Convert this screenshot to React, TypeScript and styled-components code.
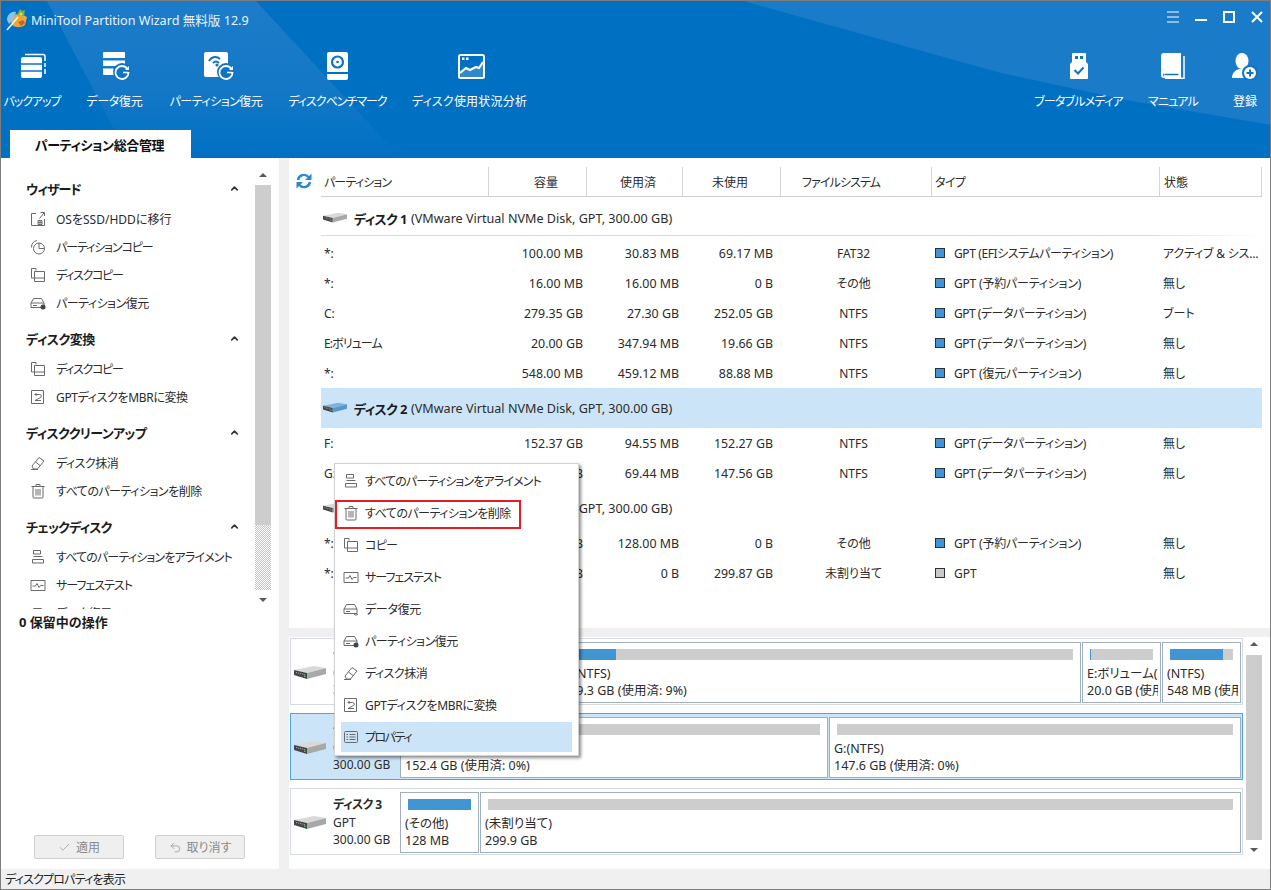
import React from "react";
import styled, { createGlobalStyle } from "styled-components";
import { Check, ChevronUp, Undo2 } from "lucide-react";

const GlobalStyle = createGlobalStyle`
  html, body {
    margin: 0;
    padding: 0;
    background: #fff;
  }
  body {
    font-family: "Noto Sans", "Noto Sans CJK JP", sans-serif;
    font-size: 12px;
    font-feature-settings: "palt";
    color: #2b2b2b;
    overflow: hidden;
  }
`;

// the kana in the original UI font is narrower than Noto's, so strings get tightened
const TRACK: Record<string, number> = {
  "バックアップ": -1.1,
  "パーティション復元": -0.5,
  "ディスクベンチマーク": -1,
  "ディスク使用状況分析": 0.2,
  "ブータブルメディア": -0.8,
  "マニュアル": -0.8,
  "パーティション総合管理": -0.4,
  "ウィザード": -1,
  "ディスク変換": -0.5,
  "ディスククリーンアップ": -0.6,
  "チェックディスク": -0.8,
  "パーティションコピー": -1.1,
  "ディスクコピー": -1.3,
  "GPTディスクをMBRに変換": -0.35,
  "ディスク抹消": -0.5,
  "すべてのパーティションを削除": -0.5,
  "すべてのパーティションをアライメント": -0.85,
  "サーフェステスト": -1,
  "データ復元": -0.3,
  "コピー": -0.7,
  "プロパティ": -1.5,
  "パーティション": -0.85,
  "ファイルシステム": -0.9,
  "タイプ": -0.5,
  "ディスク 1": -0.6,
  "ディスク 2": -0.6,
  "ディスク 3": -0.6,
  "E:ボリューム": -0.9,
  "GPT (EFIシステムパーティション)": -0.4,
  "GPT (予約パーティション)": -0.2,
  "GPT (データパーティション)": -0.5,
  "GPT (復元パーティション)": -0.2,
  "アクティブ & シス...": -0.2,
  "ディスクプロパティを表示": -0.8,
};

const Tracked = styled.span<{ $ls: number }>`
  letter-spacing: ${(p) => p.$ls}px;
`;

const T = ({ children }: { children: string }) => (
  <Tracked $ls={TRACK[children] ?? 0}>{children}</Tracked>
);

const Window = styled.div`
  position: relative;
  box-sizing: border-box;
  width: 1271px;
  height: 890px;
  border: 1px solid #7d7d7d;
  display: flex;
  flex-direction: column;
  overflow: hidden;
  background: #fff;
`;

const Header = styled.header`
  position: relative;
  flex: none;
  height: 157px;
  background: #0070c2;
  display: flex;
  flex-direction: column;
  color: #fff;
  overflow: hidden;

  &::before {
    content: "";
    position: absolute;
    inset: 0;
    background: linear-gradient(180deg, #1c7cc9 0%, #1478c6 55%, #0070c2 100%);
    clip-path: polygon(46px 0, 128px 157px, 400px 157px, 255px 0);
  }
  &::after {
    content: "";
    position: absolute;
    inset: 0;
    background: #1a7bc8;
    clip-path: polygon(742px 0, 1000px 72px, 1130px 100px, 1271px 124px, 1271px 0);
  }
  & > * {
    position: relative;
    z-index: 1;
  }
`;

const TitleBar = styled.div`
  height: 36px;
  flex: none;
  display: flex;
  align-items: center;
  padding: 0 7px 0 5px;
`;

const TitleText = styled.span`
  margin-left: 3px;
  font-size: 12.6px;
  color: #eaf3fb;
  white-space: nowrap;
`;

const WindowControls = styled.div`
  margin-left: auto;
  display: flex;
  gap: 16px;
  margin-top: -4px;
`;

const Toolbar = styled.div`
  height: 93px;
  flex: none;
  display: flex;
  padding: 0 12px 0 3px;
`;

const ToolGroup = styled.div<{ $right?: boolean }>`
  display: flex;
  margin-left: ${(p) => (p.$right ? "auto" : "0")};
`;

const Tool = styled.div<{ $w: number; $gap: number }>`
  width: ${(p) => p.$w}px;
  margin-right: ${(p) => p.$gap}px;
  padding-top: 15px;
  display: flex;
  flex-direction: column;
  align-items: center;
`;

const ToolIcon = styled.div<{ $dx: number }>`
  height: 28px;
  margin-left: ${(p) => p.$dx}px;
  display: flex;
  align-items: center;
  justify-content: center;
`;

const ToolLabel = styled.span`
  margin-top: 13px;
  font-size: 12px;
  line-height: 18px;
  white-space: nowrap;
`;

const TabRow = styled.div`
  flex: 1;
  padding-left: 9px;
  display: flex;
  align-items: flex-end;
`;

const Tab = styled.div`
  width: 181px;
  height: 28px;
  background: #fff;
  color: #111;
  font-weight: 700;
  font-size: 13px;
  display: flex;
  align-items: center;
  justify-content: center;
  padding-right: 2px;
  box-sizing: border-box;
`;

const Body = styled.div`
  flex: 1;
  min-height: 0;
  display: flex;
  background: #f0f0f0;
`;

const Sidebar = styled.aside`
  width: 278px;
  flex: none;
  background: #fff;
  display: flex;
  flex-direction: column;
`;

const SidebarScroll = styled.div`
  height: 451px;
  flex: none;
  display: flex;
`;

const SidebarList = styled.div`
  width: 254px;
  flex: none;
  padding-top: 21px;
  box-sizing: border-box;
  overflow: hidden;
`;

const Section = styled.section`
  margin-bottom: 12px;
`;

const SectionTitle = styled.div`
  height: 20px;
  margin: 0 0 6px 25px;
  padding: 0 15px 2px 0;
  box-sizing: border-box;
  display: flex;
  align-items: center;
  justify-content: space-between;
  font-size: 13px;
  font-weight: 700;
  color: #1c1c1c;
`;

const SideItem = styled.div`
  height: 28px;
  padding-left: 29px;
  display: flex;
  align-items: center;
  gap: 10px;
  white-space: nowrap;
`;

const Scrollbar = styled.div<{ $top: number }>`
  width: 16px;
  flex: none;
  margin-top: ${(p) => p.$top}px;
  display: flex;
  flex-direction: column;
  align-items: center;
`;

const ArrowBox = styled.div<{ $h: number; $pad: number }>`
  height: ${(p) => p.$h}px;
  padding-top: ${(p) => p.$pad}px;
  box-sizing: border-box;
  flex: none;
  display: flex;
  align-items: flex-start;
  justify-content: center;
`;

const Arrow = styled.span<{ $down?: boolean }>`
  width: 0;
  height: 0;
  border-left: 4px solid transparent;
  border-right: 4px solid transparent;
  ${(p) =>
    p.$down ? "border-top: 4px solid #5a5a5a;" : "border-bottom: 4px solid #5a5a5a;"}
`;

const Thumb = styled.div<{ $h: number }>`
  width: 100%;
  height: ${(p) => p.$h}px;
  flex: none;
  background: #cdcdcd;
`;

const Hatch = styled.div<{ $h: number }>`
  width: 100%;
  height: ${(p) => p.$h}px;
  flex: none;
  background: repeating-conic-gradient(#c4c4c4 0 25%, #fff 0 50%) 0 0 / 2px 2px;
`;

const Pending = styled.div`
  margin: 3px 0 0 18px;
  font-size: 13px;
  font-weight: 700;
  line-height: 20px;
  color: #1c1c1c;
`;

const ActionBar = styled.div`
  margin-top: auto;
  padding: 0 0 11px 33px;
  display: flex;
  gap: 31px;
`;

const ActionButton = styled.button`
  width: 90px;
  height: 24px;
  padding: 0;
  background: #efefef;
  border: 1px solid #cfcfcf;
  border-radius: 2px;
  color: #8a8a8a;
  font: inherit;
  display: flex;
  align-items: center;
  justify-content: center;
  gap: 5px;
`;

const Main = styled.main`
  margin-left: 10px;
  flex: 1;
  min-width: 0;
  background: #fff;
  display: flex;
  flex-direction: column;
`;

const TableArea = styled.div`
  height: 470px;
  flex: none;
  padding: 9px 8px 0 0;
  box-sizing: border-box;
  overflow: hidden;
`;

const COLUMNS = "168px 98px 96px 98px 151px 228px 102px";

const HeadRow = styled.div`
  display: flex;
`;

const RefreshSlot = styled.div`
  width: 32px;
  flex: none;
  display: flex;
  align-items: center;
  justify-content: center;
  padding: 0 2px 2px 0;
  box-sizing: border-box;
`;

const HeadGrid = styled.div`
  flex: 1;
  height: 30px;
  box-sizing: border-box;
  display: grid;
  grid-template-columns: ${COLUMNS};
  border-bottom: 1px solid #cfcfcf;
`;

const HeadCell = styled.div<{ $right?: number; $left?: number }>`
  display: flex;
  align-items: center;
  justify-content: ${(p) => (p.$right ? "flex-end" : "flex-start")};
  padding-right: ${(p) => p.$right ?? 0}px;
  padding-left: ${(p) => p.$left ?? 0}px;
  border-right: 1px solid #d6d6d6;
  white-space: nowrap;
`;

const Rows = styled.div`
  margin: 1px 0 0 32px;
`;

const DiskRow = styled.div<{ $selected?: boolean; $lined?: boolean }>`
  height: 40px;
  padding-left: 2px;
  display: flex;
  align-items: center;
  gap: 7px;
  white-space: nowrap;
  background: ${(p) =>
    p.$selected
      ? "#cce4f7"
      : p.$lined
        ? "linear-gradient(90deg, #dcdcdc 88%, transparent) no-repeat left bottom 2px / 100% 1px"
        : "none"};
`;

const DiskName = styled.b`
  font-size: 13px;
  color: #1c1c1c;
`;

const DiskDetail = styled.span`
  margin-left: -3px;
  font-size: 12.6px;
`;

const DataRow = styled.div`
  height: 30px;
  display: grid;
  grid-template-columns: ${COLUMNS};
  align-items: center;
  white-space: nowrap;
`;

const Cell = styled.div<{ $left?: number }>`
  padding-left: ${(p) => p.$left ?? 0}px;
  overflow: hidden;
`;

const NumCell = styled.div<{ $right: number }>`
  text-align: right;
  padding-right: ${(p) => p.$right}px;
  font-size: 12.4px;
`;

const FsCell = styled.div`
  text-align: center;
  padding-right: 6px;
`;

const TypeCell = styled.div`
  padding-left: 3px;
  display: flex;
  align-items: center;
  gap: 9px;
`;

const Swatch = styled.span<{ $gray?: boolean }>`
  width: 10px;
  height: 10px;
  box-sizing: border-box;
  border: 1px solid #28323c;
  background: ${(p) => (p.$gray ? "#c9c9c9" : "#3f93d6")};
`;

const MapArea = styled.div`
  flex: 1;
  min-height: 0;
  border-top: 9px solid #f0f0f0;
  padding: 1px 8px 0 1px;
  display: flex;
  gap: 3px;
`;

const Cards = styled.div`
  width: 953px;
  flex: none;
  display: flex;
  flex-direction: column;
  gap: 8px;
`;

const Card = styled.div<{ $selected?: boolean }>`
  height: 67px;
  box-sizing: border-box;
  border: 1px solid ${(p) => (p.$selected ? "#4fa3e8" : "#d6dce2")};
  background: ${(p) => (p.$selected ? "#cce4f7" : "#fff")};
  padding: 3px 1px 1px 0;
  display: flex;
`;

const DiskInfo = styled.div`
  width: 109px;
  flex: none;
  padding-left: 3px;
  box-sizing: border-box;
  display: flex;
  align-items: center;
  gap: 7px;
`;

const InfoText = styled.div`
  line-height: 17.5px;
  white-space: nowrap;
`;

const Parts = styled.div`
  flex: 1;
  display: flex;
  gap: 1px;
`;

const PartBox = styled.div<{ $w: number }>`
  width: ${(p) => p.$w}px;
  flex: none;
  box-sizing: border-box;
  border: 1px solid #a1afc3;
  background: #fff;
  overflow: hidden;
  white-space: nowrap;
`;

const Bar = styled.div<{ $pct: number }>`
  height: 11px;
  margin: 6px 7px 5px 7px;
  background: linear-gradient(
    90deg,
    #3f96d3 ${(p) => p.$pct}%,
    #cdcdcd ${(p) => p.$pct}%
  );
`;

const PartLine = styled.div`
  margin: 0 2px 0 4px;
  font-size: 12.5px;
  line-height: 17px;
  overflow: hidden;
`;

const Menu = styled.div`
  position: absolute;
  left: 333px;
  top: 462px;
  width: 245px;
  height: 293px;
  box-sizing: border-box;
  padding-top: 2px;
  background: #fff;
  border: 1px solid #d2d2d2;
  box-shadow: 2px 2px 3px rgba(0, 0, 0, 0.45);
  z-index: 5;
  display: flex;
  flex-direction: column;
  gap: 2px;
`;

const MenuItem = styled.div<{ $active?: boolean }>`
  position: relative;
  height: 30px;
  flex: none;
  margin: 0 6px;
  padding-left: 2px;
  display: flex;
  align-items: center;
  gap: 6px;
  white-space: nowrap;
  background: ${(p) => (p.$active ? "#cce4f7" : "transparent")};
`;

const RedFrame = styled.span`
  position: absolute;
  left: -6px;
  top: 2px;
  width: 186px;
  height: 29px;
  box-sizing: border-box;
  border: 2px solid #e81c24;
`;

const StatusBar = styled.footer`
  height: 20px;
  flex: none;
  margin-top: -1px;
  background: #f0f0f0;
  padding-left: 4px;
  display: flex;
  align-items: center;
  color: #222;
`;

const Line = (props: React.SVGProps<SVGSVGElement>) => (
  <svg
    width="16"
    height="16"
    viewBox="0 0 16 16"
    fill="none"
    stroke="#6a6a6a"
    strokeWidth="1"
    style={{ flex: "none" }}
    {...props}
  />
);

const MigrateIcon = () => (
  <Line>
    <path d="M6 2.500H1.500v12h13V8M9.500 7.500L14 2M10.500 1.500H14.500V5" />
    <path d="M8 9.500h4v4H8zM8 11.500h4M10 9.500v4" />
  </Line>
);
const PartCopyIcon = () => (
  <Line>
    <circle cx="9" cy="9.500" r="5.500" />
    <path d="M9 4v5.500h5.500M1.500 8.500A7 7 0 0 1 7 1.500" />
  </Line>
);
const DiskCopyIcon = () => (
  <Line>
    <path d="M6 3.500V1.500H1.500V11H4" />
    <path d="M4.500 4.500h10v10h-10zM4.500 11h10" />
  </Line>
);
const RecoverIcon = () => (
  <Line>
    <path d="M3.500 3.500h8l2.500 4.500v4.500H1V8zM1 8h13M3 10.500h4" />
    <circle cx="13" cy="12" r="2.500" fill="#444" stroke="none" />
  </Line>
);
const DataRecoverIcon = () => (
  <Line>
    <path d="M3.500 3.500h8l2.500 4.500v4.500H1V8zM1 8h13M3 10.500h4" />
    <path d="M11 13a2.500 2.500 0 0 0 4 0" />
  </Line>
);
const EraserIcon = () => (
  <Line>
    <path d="M2 11L9 2.500l5 3.500-6.500 8H3.500zM5.500 7l4.500 3.500M1 14.500h7" />
  </Line>
);
const TrashIcon = () => (
  <Line>
    <path d="M1.500 3.500h13M6 3V1.500h4V3M3 3.500v10.500a1 1 0 0 0 1 1h8a1 1 0 0 0 1-1V3.500M6 6v6.500M8 6v6.500M10 6v6.500" />
  </Line>
);
const AlignIcon = () => (
  <Line>
    <path d="M3.500 1.500h7v3.500h-7zM3.500 7.500h9M2.500 10.500h11v3.500h-11z" />
  </Line>
);
const SurfaceIcon = () => (
  <Line>
    <path d="M1 3.500h14v10H1zM2.500 9h3l1.500-2.500 2 4 1.500-2h3" />
  </Line>
);
const ConvertIcon = () => (
  <Line>
    <path d="M1.500 1.500h12v13h-12z" />
    <path d="M5 5.500l1.500-1.500M5 5.500l1.500 1.500M5 5.500h4.500a1.500 1.500 0 0 1 0 3.500L5 11.500h6" />
  </Line>
);
const PropsIcon = () => (
  <Line>
    <rect x="1.500" y="2.500" width="13" height="11" rx="1" />
    <path d="M3.500 5.500h1.500M6.500 5.500h6M3.500 8h1.500M6.500 8h6M3.500 10.500h1.500M6.500 10.500h6" />
  </Line>
);

const RefreshIcon = () => (
  <svg width="16" height="16" viewBox="0 0 16 16" fill="none" stroke="#2a87d3" strokeWidth="2.400">
    <path d="M2 7A6 6 0 0 1 12.500 4" />
    <path d="M14 9a6 6 0 0 1-10.500 3" />
    <path d="M15.500 0.500v6.500H9zM0.500 15.500V9H7z" fill="#2a87d3" stroke="none" />
  </svg>
);

const DiskIcon = ({ w = 32, blue = false }: { w?: number; blue?: boolean }) => (
  <svg width={w} height={(w * 15) / 32} viewBox="0 0 32 15" style={{ flex: "none" }}>
    <polygon points="0,5 20,1 32,3 13,8" fill={blue ? "#7fb3dc" : "#d9d9d9"} />
    <polygon points="0,5 13,8 13,14 0,10" fill="#454545" />
    <polygon points="13,8 32,3 32,9 13,14" fill={blue ? "#5b97c8" : "#a8a8a8"} />
    <path d="M2 7.500l9 2.200" stroke="#b8b8b8" strokeWidth="1" strokeDasharray="1 1" />
    <rect x="10" y="10.500" width="1.500" height="1.500" fill="#58b868" />
  </svg>
);

const Logo = () => (
  <svg width="22" height="24" viewBox="0 0 22 24" style={{ flex: "none" }}>
    <path d="M4 10C8 6 16 7 21 10l-2 8c-4 3-9 3-13 0z" fill="#e9a83a" />
    <path d="M11 8l3-6 2 2 3-1-1 6z" fill="#7fb24a" />
    <path d="M1 13C1 8 5 4 10 5 9 9 7 14 3 17z" fill="#8cc3ea" />
    <path d="M1 23L12 10" stroke="#f4f4f4" strokeWidth="1.600" />
    <path d="M12 15l5-2 2 3-4 3z" fill="#c8642c" />
    <circle cx="15" cy="7" r="1.500" fill="#f2d34a" />
  </svg>
);

const BLUE = "#0f74c4";

const RecoverArrow = ({ cx, cy }: { cx: number; cy: number }) => (
  <>
    <circle cx={cx} cy={cy} r="9" fill={BLUE} />
    <path
      d={`M${cx + 5.5} ${cy - 3}A6.500 6.500 0 1 0 ${cx + 6.5} ${cy}`}
      fill="none"
      stroke="#fff"
      strokeWidth="1.800"
    />
    <path d={`M${cx + 7} ${cy - 6}v4h-4z`} fill="#fff" />
    <path d={`M${cx + 1} ${cy + 0.5}h5.500`} stroke="#fff" strokeWidth="1.500" />
  </>
);

const BackupIcon = () => (
  <svg width="26" height="26" viewBox="0 0 26 26">
    <rect x="0" y="4" width="21" height="21" rx="2" fill="#fff" />
    <path d="M0 11h21M0 18h21" stroke={BLUE} strokeWidth="1.500" />
    <path
      d="M4 1.500h18a2 2 0 0 1 2 2V8M24 10v4M24 16v5"
      fill="none"
      stroke="#fff"
      strokeWidth="1.500"
    />
  </svg>
);

const DataIcon = () => (
  <svg width="27" height="28" viewBox="0 0 27 28">
    <path d="M1 0h20a1 1 0 0 1 1 1v5H0V1a1 1 0 0 1 1-1zM0 8.500h22V14H0zM0 16.500h22V22a1 1 0 0 1-1 1H1a1 1 0 0 1-1-1z" fill="#fff" />
    <RecoverArrow cx={19} cy={20} />
  </svg>
);

const PartIcon = () => (
  <svg width="30" height="28" viewBox="0 0 30 28">
    <rect x="0" y="0" width="24" height="25" rx="2" fill="#fff" />
    <path d="M5 9C8 4 13 4 16 7" fill="none" stroke={BLUE} strokeWidth="2" />
    <path d="M9 11c2-2 4-2 6 0" fill="none" stroke={BLUE} strokeWidth="2" />
    <circle cx="13" cy="13" r="1.600" fill={BLUE} />
    <RecoverArrow cx={22} cy={20} />
  </svg>
);

const BenchIcon = () => (
  <svg width="21" height="28" viewBox="0 0 21 28">
    <path d="M2 0h17a2 2 0 0 1 2 2v18H0V2a2 2 0 0 1 2-2z" fill="#fff" />
    <path d="M0 22h21v4a2 2 0 0 1-2 2H2a2 2 0 0 1-2-2z" fill="#fff" />
    <circle cx="10.500" cy="10" r="5.500" fill="none" stroke={BLUE} strokeWidth="2.200" />
    <circle cx="10.500" cy="10" r="1.300" fill={BLUE} />
  </svg>
);

const UsageIcon = () => (
  <svg width="27" height="25" viewBox="0 0 27 25">
    <rect x="1" y="1" width="25" height="23" rx="1.500" fill="none" stroke="#fff" strokeWidth="2" />
    <rect x="4" y="3.500" width="2.500" height="2.500" fill="#fff" />
    <rect x="8" y="3.500" width="2.500" height="2.500" fill="#fff" />
    <path d="M2 19l6-5 4 2 6-3 3 1 4-6" fill="none" stroke="#fff" strokeWidth="2.200" />
    <path d="M2 19l6-5 4 2 6-3 3 1 4-6v15H2z" fill="#fff" opacity="0.18" />
  </svg>
);

const UsbIcon = () => (
  <svg width="18" height="26" viewBox="0 0 18 26">
    <rect x="2" y="0" width="14" height="12" rx="1" fill="#fff" />
    <rect x="5" y="3" width="3" height="3" fill={BLUE} />
    <rect x="10" y="3" width="3" height="3" fill={BLUE} />
    <path d="M2 9h14l2 2v14a1 1 0 0 1-1 1H1a1 1 0 0 1-1-1V11z" fill="#fff" />
    <path d="M4.500 17l3.500 3.500 5.500-6" fill="none" stroke={BLUE} strokeWidth="2" />
  </svg>
);

const BookIcon = () => (
  <svg width="24" height="26" viewBox="0 0 24 26">
    <path d="M3 0h17v20H4a2 2 0 0 0 0 4h16v1H3a3 3 0 0 1-3-3V3a3 3 0 0 1 3-3z" fill="#fff" />
    <path d="M3 20h17v4H3z" fill="#fff" />
    <path d="M3.500 21.500h14" stroke={BLUE} strokeWidth="1.500" />
    <path d="M23 3v22.200H4" fill="none" stroke="#fff" strokeWidth="1.500" />
  </svg>
);

const UserIcon = () => (
  <svg width="26" height="27" viewBox="0 0 26 27">
    <ellipse cx="10" cy="8" rx="6.500" ry="8" fill="#fff" />
    <path d="M0 25c0-6 4-8 7-9h6c4 1 7 3 7 9z" fill="#fff" />
    <circle cx="18" cy="20" r="8" fill={BLUE} />
    <circle cx="18" cy="20" r="6" fill="#fff" />
    <path d="M14.500 20h7M18 16.500v7" stroke={BLUE} strokeWidth="2" />
  </svg>
);

const Ctrl = ({ d, w = 1.2 }: { d: string; w?: number }) => (
  <svg width="12" height="12" viewBox="0 0 12 12" fill="none" stroke="#fff" strokeWidth={w}>
    <path d={d} />
  </svg>
);

const leftTools = [
  { label: "バックアップ", w: 56, gap: 26, dx: 4, icon: <BackupIcon /> },
  { label: "データ復元", w: 57, gap: 26, dx: 3, icon: <DataIcon /> },
  { label: "パーティション復元", w: 94, gap: 25, dx: 6, icon: <PartIcon /> },
  { label: "ディスクベンチマーク", w: 99, gap: 25, dx: 0, icon: <BenchIcon /> },
  { label: "ディスク使用状況分析", w: 115, gap: 0, dx: 3, icon: <UsageIcon /> },
];

const rightTools = [
  { label: "ブータブルメディア", w: 89, gap: 25, dx: 0, icon: <UsbIcon /> },
  { label: "マニュアル", w: 50, gap: 34, dx: 0, icon: <BookIcon /> },
  { label: "登録", w: 26, gap: 0, dx: 0, icon: <UserIcon /> },
];

const sideSections = [
  {
    title: "ウィザード",
    items: [
      { text: "OSをSSD/HDDに移行", icon: <MigrateIcon /> },
      { text: "パーティションコピー", icon: <PartCopyIcon /> },
      { text: "ディスクコピー", icon: <DiskCopyIcon /> },
      { text: "パーティション復元", icon: <RecoverIcon /> },
    ],
  },
  {
    title: "ディスク変換",
    items: [
      { text: "ディスクコピー", icon: <DiskCopyIcon /> },
      { text: "GPTディスクをMBRに変換", icon: <ConvertIcon /> },
    ],
  },
  {
    title: "ディスククリーンアップ",
    items: [
      { text: "ディスク抹消", icon: <EraserIcon /> },
      { text: "すべてのパーティションを削除", icon: <TrashIcon /> },
    ],
  },
  {
    title: "チェックディスク",
    items: [
      { text: "すべてのパーティションをアライメント", icon: <AlignIcon /> },
      { text: "サーフェステスト", icon: <SurfaceIcon /> },
      { text: "データ復元", icon: <DataRecoverIcon /> },
    ],
  },
];

type Row = [string, string, string, string, string, string, string, boolean?];

const disks: { name: string; info: string; selected?: boolean; lined?: boolean; rows: Row[] }[] = [
  {
    name: "ディスク 1",
    info: "(VMware Virtual NVMe Disk, GPT, 300.00 GB)",
    lined: true,
    rows: [
      ["*:", "100.00 MB", "30.83 MB", "69.17 MB", "FAT32", "GPT (EFIシステムパーティション)", "アクティブ & シス..."],
      ["*:", "16.00 MB", "16.00 MB", "0 B", "その他", "GPT (予約パーティション)", "無し"],
      ["C:", "279.35 GB", "27.30 GB", "252.05 GB", "NTFS", "GPT (データパーティション)", "ブート"],
      ["E:ボリューム", "20.00 GB", "347.94 MB", "19.66 GB", "NTFS", "GPT (データパーティション)", "無し"],
      ["*:", "548.00 MB", "459.12 MB", "88.88 MB", "NTFS", "GPT (復元パーティション)", "無し"],
    ],
  },
  {
    name: "ディスク 2",
    info: "(VMware Virtual NVMe Disk, GPT, 300.00 GB)",
    selected: true,
    rows: [
      ["F:", "152.37 GB", "94.55 MB", "152.27 GB", "NTFS", "GPT (データパーティション)", "無し"],
      ["G:", "147.63 GB", "69.44 MB", "147.56 GB", "NTFS", "GPT (データパーティション)", "無し"],
    ],
  },
  {
    name: "ディスク 3",
    info: "(VMware Virtual NVMe Disk, GPT, 300.00 GB)",
    rows: [
      ["*:", "128.00 MB", "128.00 MB", "0 B", "その他", "GPT (予約パーティション)", "無し"],
      ["*:", "299.87 GB", "0 B", "299.87 GB", "未割り当て", "GPT", "無し", true],
    ],
  },
];

const mapCards = [
  {
    name: "ディスク 1",
    parts: [
      { w: 79, pct: 30, a: "(FAT32)", b: "100 MB" },
      { w: 76, pct: 100, a: "(その他)", b: "16 MB" },
      { w: 524, pct: 10, a: "C:(NTFS)", b: "279.3 GB (使用済: 9%)" },
      { w: 79, pct: 1.5, a: "E:ボリューム(NTFS)", b: "20.0 GB (使用済: 1%)" },
      { w: 79, pct: 84, a: "(NTFS)", b: "548 MB (使用済: 83%)" },
    ],
  },
  {
    name: "ディスク 2",
    selected: true,
    parts: [
      { w: 428, pct: 0, a: "F:(NTFS)", b: "152.4 GB (使用済: 0%)" },
      { w: 412, pct: 0, a: "G:(NTFS)", b: "147.6 GB (使用済: 0%)" },
    ],
  },
  {
    name: "ディスク 3",
    parts: [
      { w: 79, pct: 100, a: "(その他)", b: "128 MB" },
      { w: 761, pct: 0, a: "(未割り当て)", b: "299.9 GB" },
    ],
  },
];

const menuItems = [
  { text: "すべてのパーティションをアライメント", icon: <AlignIcon /> },
  { text: "すべてのパーティションを削除", icon: <TrashIcon />, framed: true },
  { text: "コピー", icon: <DiskCopyIcon /> },
  { text: "サーフェステスト", icon: <SurfaceIcon /> },
  { text: "データ復元", icon: <DataRecoverIcon /> },
  { text: "パーティション復元", icon: <RecoverIcon /> },
  { text: "ディスク抹消", icon: <EraserIcon /> },
  { text: "GPTディスクをMBRに変換", icon: <ConvertIcon /> },
  { text: "プロパティ", icon: <PropsIcon />, active: true },
];

export default function App() {
  return (
    <Window>
      <GlobalStyle />
      <Header>
        <TitleBar>
          <Logo />
          <TitleText>MiniTool Partition Wizard 無料版 12.9</TitleText>
          <WindowControls>
            <Ctrl d="M0 1h12M0 6h12M0 11h12" w={1} />
            <Ctrl d="M0 9h12" w={2} />
            <Ctrl d="M1 1h10v10H1z" w={2} />
            <Ctrl d="M1 1l10 10M11 1L1 11" w={2} />
          </WindowControls>
        </TitleBar>
        <Toolbar>
          <ToolGroup>
            {leftTools.map((t) => (
              <Tool key={t.label} $w={t.w} $gap={t.gap}>
                <ToolIcon $dx={t.dx}>{t.icon}</ToolIcon>
                <ToolLabel>
                  <T>{t.label}</T>
                </ToolLabel>
              </Tool>
            ))}
          </ToolGroup>
          <ToolGroup $right>
            {rightTools.map((t) => (
              <Tool key={t.label} $w={t.w} $gap={t.gap}>
                <ToolIcon $dx={t.dx}>{t.icon}</ToolIcon>
                <ToolLabel>
                  <T>{t.label}</T>
                </ToolLabel>
              </Tool>
            ))}
          </ToolGroup>
        </Toolbar>
        <TabRow>
          <Tab>
            <T>パーティション総合管理</T>
          </Tab>
        </TabRow>
      </Header>

      <Body>
        <Sidebar>
          <SidebarScroll>
            <SidebarList>
              {sideSections.map((s) => (
                <Section key={s.title}>
                  <SectionTitle>
                    <T>{s.title}</T>
                    <ChevronUp size={11} strokeWidth={3.5} color="#333" />
                  </SectionTitle>
                  {s.items.map((i) => (
                    <SideItem key={i.text}>
                      {i.icon}
                      <T>{i.text}</T>
                    </SideItem>
                  ))}
                </Section>
              ))}
            </SidebarList>
            <Scrollbar $top={11}>
              <ArrowBox $h={16} $pad={4}>
                <Arrow />
              </ArrowBox>
              <Thumb $h={340} />
              <Hatch $h={65} />
              <ArrowBox $h={17} $pad={8}>
                <Arrow $down />
              </ArrowBox>
            </Scrollbar>
          </SidebarScroll>
          <Pending>0 保留中の操作</Pending>
          <ActionBar>
            <ActionButton>
              <Check size={13} strokeWidth={1.2} />
              適用
            </ActionButton>
            <ActionButton>
              <Undo2 size={13} strokeWidth={1.2} />
              取り消す
            </ActionButton>
          </ActionBar>
        </Sidebar>

        <Main>
          <TableArea>
            <HeadRow>
              <RefreshSlot>
                <RefreshIcon />
              </RefreshSlot>
              <HeadGrid>
                <HeadCell $left={3}>
                  <T>パーティション</T>
                </HeadCell>
                <HeadCell $right={28}>容量</HeadCell>
                <HeadCell $right={26}>使用済</HeadCell>
                <HeadCell $right={32}>未使用</HeadCell>
                <HeadCell $left={21}>
                  <T>ファイルシステム</T>
                </HeadCell>
                <HeadCell $left={3}>
                  <T>タイプ</T>
                </HeadCell>
                <HeadCell $left={4}>状態</HeadCell>
              </HeadGrid>
            </HeadRow>
            <Rows>
              {disks.map((d) => (
                <div key={d.name}>
                  <DiskRow $selected={d.selected} $lined={d.lined}>
                    <DiskIcon w={24} blue={d.selected} />
                    <DiskName>
                      <T>{d.name}</T>
                    </DiskName>
                    <DiskDetail>{d.info}</DiskDetail>
                  </DiskRow>
                  {d.rows.map((r, idx) => (
                    <DataRow key={idx}>
                      <Cell $left={3}>
                        <T>{r[0]}</T>
                      </Cell>
                      <NumCell $right={4}>{r[1]}</NumCell>
                      <NumCell $right={4}>{r[2]}</NumCell>
                      <NumCell $right={8}>{r[3]}</NumCell>
                      <FsCell>{r[4]}</FsCell>
                      <TypeCell>
                        <Swatch $gray={r[7]} />
                        <T>{r[5]}</T>
                      </TypeCell>
                      <Cell $left={3}>
                        <T>{r[6]}</T>
                      </Cell>
                    </DataRow>
                  ))}
                </div>
              ))}
            </Rows>
          </TableArea>

          <MapArea>
            <Cards>
              {mapCards.map((c) => (
                <Card key={c.name} $selected={c.selected}>
                  <DiskInfo>
                    <DiskIcon />
                    <InfoText>
                      <b>
                        <T>{c.name}</T>
                      </b>
                      <br />
                      GPT
                      <br />
                      300.00 GB
                    </InfoText>
                  </DiskInfo>
                  <Parts>
                    {c.parts.map((p) => (
                      <PartBox key={p.a} $w={p.w}>
                        <Bar $pct={p.pct} />
                        <PartLine>{p.a}</PartLine>
                        <PartLine>{p.b}</PartLine>
                      </PartBox>
                    ))}
                  </Parts>
                </Card>
              ))}
            </Cards>
            <Scrollbar $top={0}>
              <ArrowBox $h={17} $pad={4}>
                <Arrow />
              </ArrowBox>
              <Thumb $h={185} />
              <ArrowBox $h={17} $pad={8}>
                <Arrow $down />
              </ArrowBox>
            </Scrollbar>
          </MapArea>
        </Main>
      </Body>

      <StatusBar>
        <T>ディスクプロパティを表示</T>
      </StatusBar>

      <Menu>
        {menuItems.map((m) => (
          <MenuItem key={m.text} $active={m.active}>
            {m.icon}
            <T>{m.text}</T>
            {m.framed && <RedFrame />}
          </MenuItem>
        ))}
      </Menu>
    </Window>
  );
}
